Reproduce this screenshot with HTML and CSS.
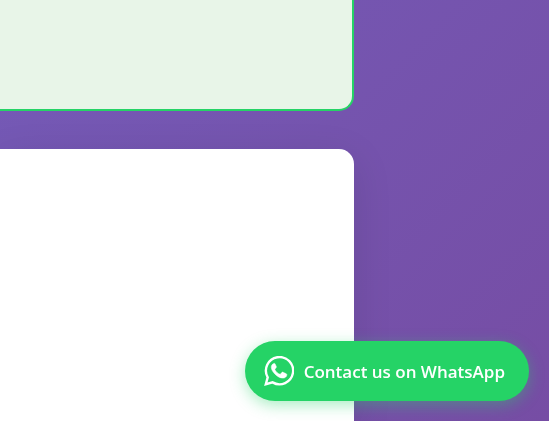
FILE: index.html
```html
<!DOCTYPE html>
<html lang="en">

<head>
  <meta charset="UTF-8">
  <meta name="viewport" content="width=device-width, initial-scale=1.0">
  <title>Contact us</title>
  <link rel="stylesheet" href="styles.css">
</head>

<body>

  <main class="container">
    <section class="notice"></section>
    <section class="card"></section>
  </main>

  <a href="#" class="whatsapp-button">
    <svg class="whatsapp-icon" viewBox="0 0 30 30" aria-hidden="true">
      <path fill="none" stroke="currentColor" stroke-width="2.4" d="M1.8 28.2l1.9-6.8A13.6 13.6 0 1 1 8.6 26.4z"/>
      <path fill="currentColor" stroke="currentColor" stroke-width=".5" stroke-linejoin="round" d="M9.3 7.8C8 8.4 7.200 9.800 7.300 11.500c.1 2.400 1.900 4.900 4 6.900 2.300 2.200 5 3.600 7.500 3.700 2 0 3.700-1.100 4-2.900.1-.7 0-1.100-.5-1.400l-3.300-1.600c-.5-.2-.9-.1-1.200.3l-1.200 1.500c-.3.3-.6.3-1 .1-2-.9-3.500-2.300-4.600-4.200-.2-.4-.2-.7.1-1l1.100-1.400c.2-.3.2-.6.1-.9l-1.200-2.700c-.2-.4-.4-.5-.8-.5-.4 0-.7.2-1 .4z"/>
    </svg>
    <span>Contact us on WhatsApp</span>
  </a>

</body>

</html>
```
FILE: styles.css
```css
* {
  box-sizing: border-box;
}

body {
  margin: 0;
  min-height: 100vh;
  font-family: "Segoe UI", "Open Sans", "Noto Sans", sans-serif;
  background: linear-gradient(135deg, #745ab7 0%, #764da4 100%);
}

.container {
  display: flex;
  flex-direction: column;
  gap: 38px;
  min-height: 100vh;
  margin-right: 195px;
}

.notice {
  height: 111px;
  background-color: #e8f5e8;
  border: 2px solid #25d366;
  border-width: 0 2px 2px 0;
  border-bottom-right-radius: 15px;
}

.card {
  flex: 1;
  background-color: #fff;
  border-top-right-radius: 15px;
  box-shadow: 0 10px 40px rgba(0, 0, 0, 0.1);
}

.whatsapp-button {
  position: fixed;
  right: 20px;
  bottom: 20px;
  display: flex;
  align-items: center;
  gap: 10px;
  height: 60px;
  padding: 0 24px 0 19px;
  border-radius: 50px;
  background-color: #25d366;
  color: #fff;
  font-size: 17px;
  font-weight: 600;
  text-decoration: none;
  white-space: nowrap;
  box-shadow: 0 4px 15px rgba(37, 211, 102, 0.4);
}

.whatsapp-icon {
  width: 30px;
  height: 30px;
}
```
